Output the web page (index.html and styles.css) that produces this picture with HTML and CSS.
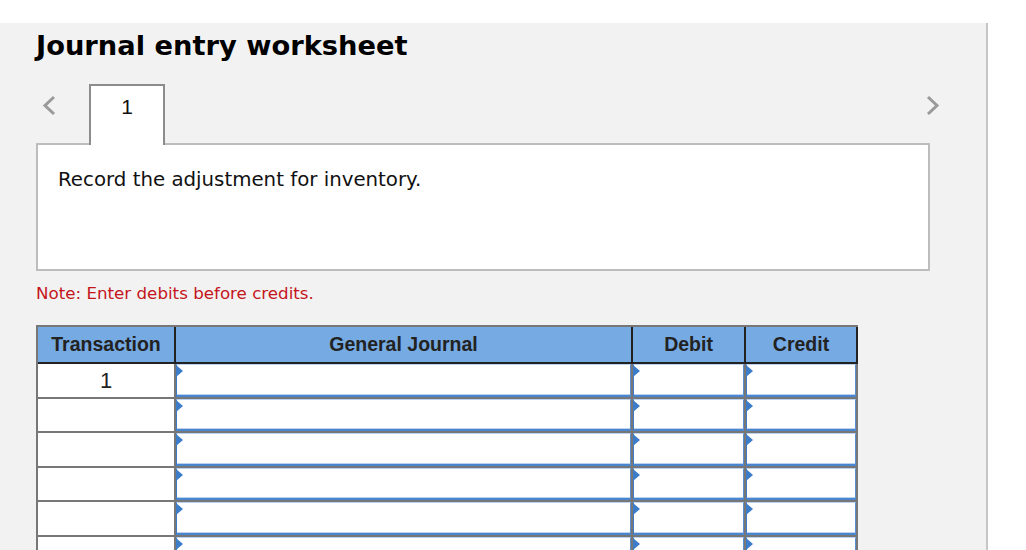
FILE: index.html
```html
<!DOCTYPE html>
<html lang="en">
<head>
<meta charset="utf-8">
<title>Journal entry worksheet</title>
<link rel="stylesheet" href="styles.css">
</head>
<body>
<main class="panel">
  <h1 class="title">Journal entry worksheet</h1>
  <div class="tabbar">
    <svg class="chev" width="14" height="21" viewBox="0 0 14 21" aria-hidden="true"><polyline points="12,2 3,10.5 12,19" fill="none" stroke="#9a9a9a" stroke-width="3"/></svg>
    <div class="tab">1</div>
    <svg class="chev chev-right" width="14" height="21" viewBox="0 0 14 21" aria-hidden="true"><polyline points="2,2 11,10.5 2,19" fill="none" stroke="#9a9a9a" stroke-width="3"/></svg>
  </div>
  <section class="prompt">Record the adjustment for inventory.</section>
  <p class="note">Note: Enter debits before credits.</p>
  <div class="journal">
    <div class="hcell">Transaction</div>
    <div class="hcell">General Journal</div>
    <div class="hcell">Debit</div>
    <div class="hcell">Credit</div>

    <div class="cell num">1</div>
    <div class="cell"><div class="field"></div></div>
    <div class="cell"><div class="field"></div></div>
    <div class="cell"><div class="field"></div></div>

    <div class="cell num"></div>
    <div class="cell"><div class="field"></div></div>
    <div class="cell"><div class="field"></div></div>
    <div class="cell"><div class="field"></div></div>

    <div class="cell num"></div>
    <div class="cell"><div class="field"></div></div>
    <div class="cell"><div class="field"></div></div>
    <div class="cell"><div class="field"></div></div>

    <div class="cell num"></div>
    <div class="cell"><div class="field"></div></div>
    <div class="cell"><div class="field"></div></div>
    <div class="cell"><div class="field"></div></div>

    <div class="cell num"></div>
    <div class="cell"><div class="field"></div></div>
    <div class="cell"><div class="field"></div></div>
    <div class="cell"><div class="field"></div></div>

    <div class="cell num"></div>
    <div class="cell"><div class="field"></div></div>
    <div class="cell"><div class="field"></div></div>
    <div class="cell"><div class="field"></div></div>
  </div>
</main>
</body>
</html>
```

FILE: styles.css
```css
html, body {
  margin: 0;
  padding: 0;
  background: #ffffff;
}

body {
  height: 550px;
  padding-top: 23px;
  box-sizing: border-box;
  overflow: hidden;
}

.panel {
  box-sizing: border-box;
  width: 988px;
  height: 100%;
  padding: 8px 0 0 36px;
  background: #f2f2f2;
  border-right: 2px solid #c6c6c6;
  overflow: hidden;
}

.title {
  margin: 0;
  font-family: "DejaVu Sans", Verdana, sans-serif;
  font-weight: bold;
  font-size: 27.3px;
  line-height: 30px;
  color: #000;
}

.tabbar {
  display: flex;
  align-items: flex-start;
  width: 904px;
  height: 61px;
  margin-top: 23px;
  position: relative;
  z-index: 1;
}

.chev {
  display: block;
  margin-top: 11px;
  margin-left: 6px;
}

.chev-right {
  margin-left: auto;
}

.tab {
  box-sizing: border-box;
  width: 76px;
  height: 61px;
  margin-left: 33px;
  padding-top: 9px;
  background: #fff;
  border: 2px solid #8c8c8c;
  border-bottom: none;
  text-align: center;
  font-family: "Liberation Sans", Arial, sans-serif;
  font-size: 21px;
  line-height: 23px;
  color: #111;
}

.prompt {
  box-sizing: border-box;
  width: 894px;
  height: 128px;
  margin-top: -2px;
  padding: 23px 20px 0;
  background: #fff;
  border: 2px solid #bdbdbd;
  font-family: "DejaVu Sans", Verdana, sans-serif;
  font-size: 19.8px;
  line-height: 24px;
  color: #111;
}

.note {
  margin: 12px 0 0;
  font-family: "DejaVu Sans", Verdana, sans-serif;
  font-size: 16.7px;
  line-height: 20px;
  color: #c4151c;
}

.journal {
  display: grid;
  grid-template-columns: 138px 457px 113px 112px;
  grid-template-rows: 37px 35px 34px 35px 34px 35px 34px;
  width: max-content;
  margin-top: 22px;
  border-left: 2px solid #777;
  border-top: 2px solid #777;
  font-family: "Liberation Sans", Arial, sans-serif;
}

.hcell {
  display: flex;
  align-items: center;
  justify-content: center;
  box-sizing: border-box;
  background: #76aae2;
  border-right: 2px solid #222;
  border-bottom: 2px solid #222;
  font-weight: bold;
  font-size: 19.5px;
  color: #222;
}

.cell {
  box-sizing: border-box;
  background: #fff;
  border-right: 2px solid #777;
  border-bottom: 2px solid #777;
}

.num {
  display: flex;
  align-items: center;
  justify-content: center;
  font-size: 22px;
  color: #222;
}

.field {
  position: relative;
  box-sizing: border-box;
  height: 100%;
  background: #fff;
  border-top: 1px solid #bcd3ef;
  border-left: 1px solid #3d7ac8;
  border-right: 1px solid #5a8fd3;
  border-bottom: 2px solid #4a86cf;
  box-shadow: inset 0 -1px 0 #bcd3ef;
}

.field::after {
  content: "";
  position: absolute;
  top: 0;
  left: -1px;
  width: 0;
  height: 0;
  border-left: 7px solid #3d7cc9;
  border-top: 6px solid transparent;
  border-bottom: 6px solid transparent;
}
```
